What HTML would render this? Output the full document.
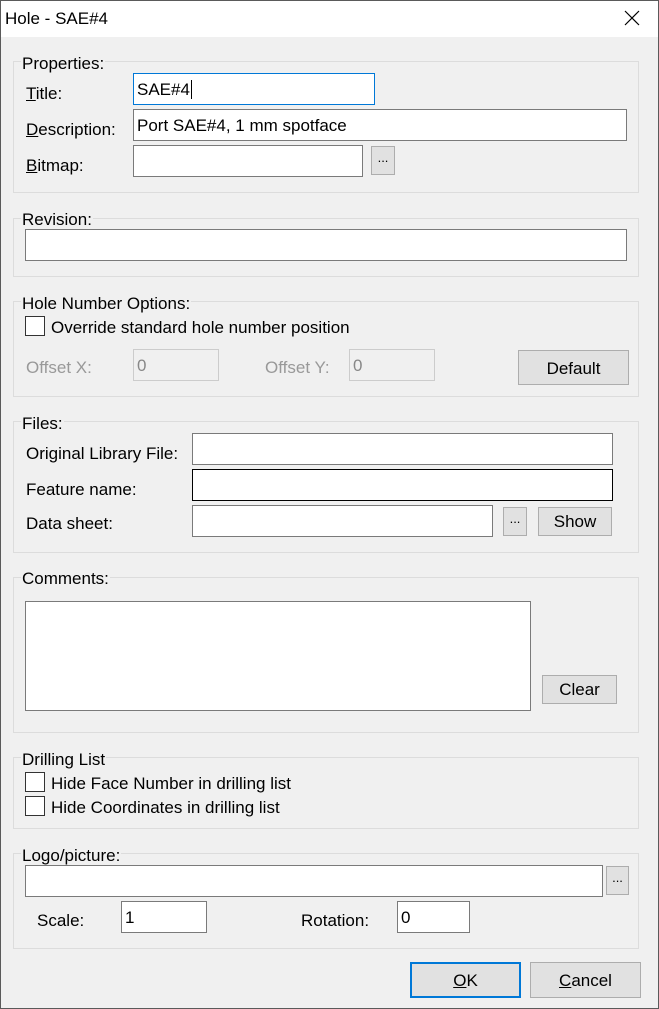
<!DOCTYPE html>
<html><head><meta charset="utf-8"><style>
*{box-sizing:border-box;margin:0;padding:0}
body{width:659px;height:1009px;position:relative;background:#f0f0f0;font-family:"Liberation Sans",sans-serif;font-size:17px;color:#000;overflow:hidden}
.win{position:absolute;left:0;top:0;width:659px;height:1009px;border:1px solid #5a5a5a}
.tb{position:absolute;left:1px;top:1px;width:657px;height:36px;background:#fff}
.a{position:absolute;white-space:nowrap}
.g{position:absolute;border:1px solid #dcdcdc}
.gl{position:absolute;background:#f0f0f0;padding:0 1px;line-height:18px;top:0}
.in{position:absolute;background:#fff;border:1px solid #7a7a7a;padding-left:3px;line-height:32px}
.dis{background:#f0f0f0;border-color:#ccc;color:#888}
.bt{position:absolute;background:#e1e1e1;border:1px solid #adadad;text-align:center}
.cb{position:absolute;width:20px;height:20px;border:1px solid #333;background:#fff}
.l{position:absolute;white-space:nowrap;line-height:20px}
u{text-decoration:underline}
</style></head><body>
<div class="win"></div>
<div class="tb"></div>
<div class="a" style="left:5px;top:9px;font-size:17px">Hole - SAE#4</div>
<svg class="a" style="left:624px;top:10px" width="16" height="16"><path d="M1 1L15 15M15 1L1 15" stroke="#000" stroke-width="1.2"/></svg>

<div class="g" style="left:13px;top:61px;width:626px;height:132px"></div>
<div class="gl" style="left:21px;top:55px">Properties:</div>
<div class="l" style="left:26px;top:84px"><u>T</u>itle:</div>
<div class="in" style="left:133px;top:73px;width:242px;height:32px;border-color:#0078d7">SAE#4<span style="border-left:1px solid #000;margin-left:1px"></span></div>
<div class="l" style="left:26px;top:120px"><u>D</u>escription:</div>
<div class="in" style="left:133px;top:109px;width:494px;height:32px">Port SAE#4, 1 mm spotface</div>
<div class="l" style="left:26px;top:156px"><u>B</u>itmap:</div>
<div class="in" style="left:133px;top:145px;width:230px;height:32px"></div>
<div class="bt" style="left:371px;top:146px;width:24px;height:29px;line-height:22px;font-size:13px">...</div>

<div class="g" style="left:13px;top:218px;width:626px;height:59px"></div>
<div class="gl" style="left:21px;top:211px">Revision:</div>
<div class="in" style="left:25px;top:229px;width:602px;height:32px"></div>

<div class="g" style="left:13px;top:301px;width:626px;height:96px"></div>
<div class="gl" style="left:21px;top:295px">Hole Number Options:</div>
<div class="cb" style="left:25px;top:316px"></div>
<div class="l" style="left:51px;top:318px">Override standard hole number position</div>
<div class="l" style="left:26px;top:358px;color:#999">Offset X:</div>
<div class="in dis" style="left:133px;top:349px;width:86px;height:32px">0</div>
<div class="l" style="left:265px;top:358px;color:#999">Offset Y:</div>
<div class="in dis" style="left:349px;top:349px;width:86px;height:32px">0</div>
<div class="bt" style="left:518px;top:350px;width:111px;height:35px;line-height:35px">Default</div>

<div class="g" style="left:13px;top:421px;width:626px;height:132px"></div>
<div class="gl" style="left:21px;top:415px">Files:</div>
<div class="l" style="left:26px;top:444px">Original Library File:</div>
<div class="in" style="left:192px;top:433px;width:421px;height:32px"></div>
<div class="l" style="left:26px;top:480px">Feature name:</div>
<div class="in" style="left:192px;top:469px;width:421px;height:32px;border-color:#000"></div>
<div class="l" style="left:26px;top:514px">Data sheet:</div>
<div class="in" style="left:192px;top:505px;width:301px;height:32px"></div>
<div class="bt" style="left:503px;top:507px;width:24px;height:29px;line-height:22px;font-size:13px">...</div>
<div class="bt" style="left:538px;top:507px;width:74px;height:29px;line-height:28px">Show</div>

<div class="g" style="left:13px;top:577px;width:626px;height:156px"></div>
<div class="gl" style="left:21px;top:570px">Comments:</div>
<div class="in" style="left:25px;top:601px;width:506px;height:110px"></div>
<div class="bt" style="left:542px;top:675px;width:75px;height:29px;line-height:28px">Clear</div>

<div class="g" style="left:13px;top:757px;width:626px;height:72px"></div>
<div class="gl" style="left:21px;top:751px">Drilling List</div>
<div class="cb" style="left:25px;top:772px"></div>
<div class="l" style="left:51px;top:774px">Hide Face Number in drilling list</div>
<div class="cb" style="left:25px;top:796px"></div>
<div class="l" style="left:51px;top:798px">Hide Coordinates in drilling list</div>

<div class="g" style="left:13px;top:853px;width:626px;height:96px"></div>
<div class="gl" style="left:21px;top:847px">Logo/picture:</div>
<div class="in" style="left:25px;top:865px;width:578px;height:32px"></div>
<div class="bt" style="left:606px;top:866px;width:23px;height:29px;line-height:22px;font-size:13px">...</div>
<div class="l" style="left:37px;top:911px">Scale:</div>
<div class="in" style="left:121px;top:901px;width:86px;height:32px">1</div>
<div class="l" style="left:301px;top:911px">Rotation:</div>
<div class="in" style="left:397px;top:901px;width:73px;height:32px">0</div>

<div class="bt" style="left:410px;top:962px;width:111px;height:36px;line-height:33px;border:2px solid #0078d7"><u>O</u>K</div>
<div class="bt" style="left:530px;top:962px;width:111px;height:36px;line-height:35px"><u>C</u>ancel</div>
</body></html>
